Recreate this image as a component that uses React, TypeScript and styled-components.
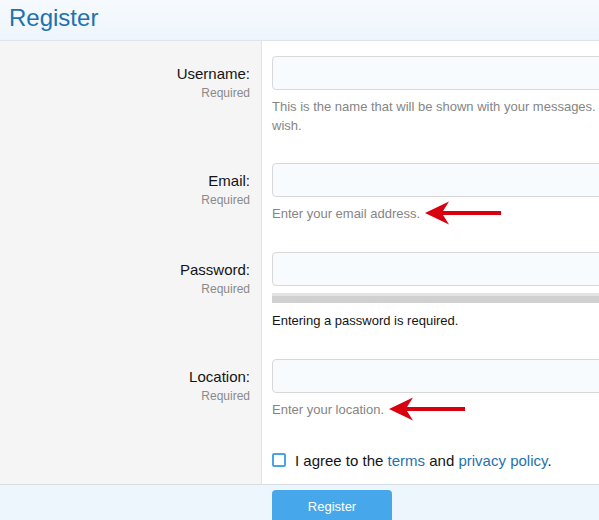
import React from "react";
import styled, { createGlobalStyle } from "styled-components";

const Global = createGlobalStyle`
  html, body { margin: 0; padding: 0; overflow: hidden; background: #fff; }
  body { font-family: "Liberation Sans", Arial, Helvetica, sans-serif; }
  * { box-sizing: border-box; }
`;

const Viewport = styled.div`
  width: 100vw;
  height: 100vh;
  overflow: hidden;
`;

const Page = styled.div`
  width: 800px;
`;

const Header = styled.div`
  height: 41px;
  padding: 0 9px;
  display: flex;
  align-items: center;
  background: linear-gradient(to bottom, #f6fafe, #edf5fc);
  border-bottom: 1px solid #dde4ea;
`;

const Title = styled.h1`
  margin: 0;
  font-size: 24px;
  font-weight: 400;
  color: #1f72ad;
  line-height: 1;
  transform: translateY(-2px);
`;

const Rows = styled.div`
  display: flex;
  flex-direction: column;
`;

const FormRow = styled.div<{ $gap?: number; $top?: number }>`
  display: grid;
  grid-template-columns: 262px 1fr;
  & > * {
    padding-top: ${(p) => p.$top ?? 0}px;
    padding-bottom: ${(p) => p.$gap ?? 29}px;
  }
`;

const LabelCell = styled.div`
  background: #f5f5f5;
  border-right: 1px solid #e2e2e2;
  padding-right: 11px;
  text-align: right;
  display: flex;
  flex-direction: column;
  align-items: flex-end;
`;

const Label = styled.div`
  font-size: 15px;
  color: #141414;
  line-height: 18px;
  margin-top: 9px;
`;

const Required = styled.div`
  font-size: 12px;
  color: #8a8a8a;
  line-height: 15px;
  margin-top: 3px;
`;

const FieldCell = styled.div`
  padding-left: 10px;
  padding-right: 10px;
  display: flex;
  flex-direction: column;
`;

const Input = styled.input`
  display: block;
  width: 100%;
  height: 34px;
  border: 1px solid #d8d8d8;
  border-radius: 4px;
  background: #f8fbfd;
  font: inherit;
  font-size: 15px;
  padding: 0 8px;
  outline: none;
`;

const Hint = styled.div<{ $dark?: boolean }>`
  margin-top: ${(p) => (p.$dark ? 8 : 7)}px;
  font-size: 13px;
  line-height: 19px;
  height: 19px;
  color: ${(p) => (p.$dark ? "#141414" : "#858585")};
  display: flex;
  align-items: center;
`;

const HintText = styled.div`
  font-size: 13px;
  line-height: 19px;
  color: #858585;
  margin-top: 7px;
`;

const Strength = styled.div`
  margin-top: 7px;
  height: 10px;
  background: #d0d0d0;
  border-top: 3px solid #e3e3e3;
`;

const Arrow = styled.svg`
  margin: -3px 0 -2px 5px;
  flex: none;
`;

const AgreeCell = styled.div`
  padding-left: 10px;
  padding-right: 10px;
  display: flex;
  align-items: flex-start;
`;

const AgreeLine = styled.div`
  height: 24px;
  display: flex;
  align-items: center;
  gap: 9px;
`;

const Check = styled.span`
  width: 14px;
  height: 14px;
  border: 2px solid #4aa3e3;
  border-radius: 2px;
  background: #fff;
  flex: none;
`;

const AgreeText = styled.span`
  font-size: 15px;
  color: #141414;
`;

const Link = styled.a`
  color: #1f72ad;
  text-decoration: none;
`;

const Footer = styled.div`
  border-top: 1px solid #d6dde3;
  background: #edf6fd;
  padding: 5px 0 0 272px;
  height: 60px;
`;

const Button = styled.button`
  width: 120px;
  height: 34px;
  border: none;
  border-radius: 4px;
  background: #47a7eb;
  color: #fff;
  font: inherit;
  font-size: 13px;
  padding: 0 0 2px;
`;

const RedArrow = () => (
  <Arrow width="76" height="24" viewBox="0 0 76 24">
    <path d="M0 12 L24 0.5 L18 10 L76 10 L76 14 L18 14 L24 23.5 Z" fill="#d8000f" />
  </Arrow>
);

export default function App() {
  return (
    <Viewport>
      <Global />
      <Page>
        <Header>
          <Title>Register</Title>
        </Header>
        <Rows>
          <FormRow $top={15} $gap={28}>
            <LabelCell>
              <Label>Username:</Label>
              <Required>Required</Required>
            </LabelCell>
            <FieldCell>
              <Input />
              <HintText>
                This is the name that will be shown with your messages. You may use any name you wish.
              </HintText>
            </FieldCell>
          </FormRow>
          <FormRow>
            <LabelCell>
              <Label>Email:</Label>
              <Required>Required</Required>
            </LabelCell>
            <FieldCell>
              <Input />
              <Hint>
                Enter your email address.
                <RedArrow />
              </Hint>
            </FieldCell>
          </FormRow>
          <FormRow>
            <LabelCell>
              <Label>Password:</Label>
              <Required>Required</Required>
            </LabelCell>
            <FieldCell>
              <Input type="password" />
              <Strength />
              <Hint $dark>Entering a password is required.</Hint>
            </FieldCell>
          </FormRow>
          <FormRow>
            <LabelCell>
              <Label>Location:</Label>
              <Required>Required</Required>
            </LabelCell>
            <FieldCell>
              <Input />
              <Hint>
                Enter your location.
                <RedArrow />
              </Hint>
            </FieldCell>
          </FormRow>
          <FormRow $gap={12}>
            <LabelCell />
            <AgreeCell>
              <AgreeLine>
                <Check />
                <AgreeText>
                  I agree to the <Link href="#">terms</Link> and <Link href="#">privacy policy</Link>.
                </AgreeText>
              </AgreeLine>
            </AgreeCell>
          </FormRow>
        </Rows>
        <Footer>
          <Button>Register</Button>
        </Footer>
      </Page>
    </Viewport>
  );
}
